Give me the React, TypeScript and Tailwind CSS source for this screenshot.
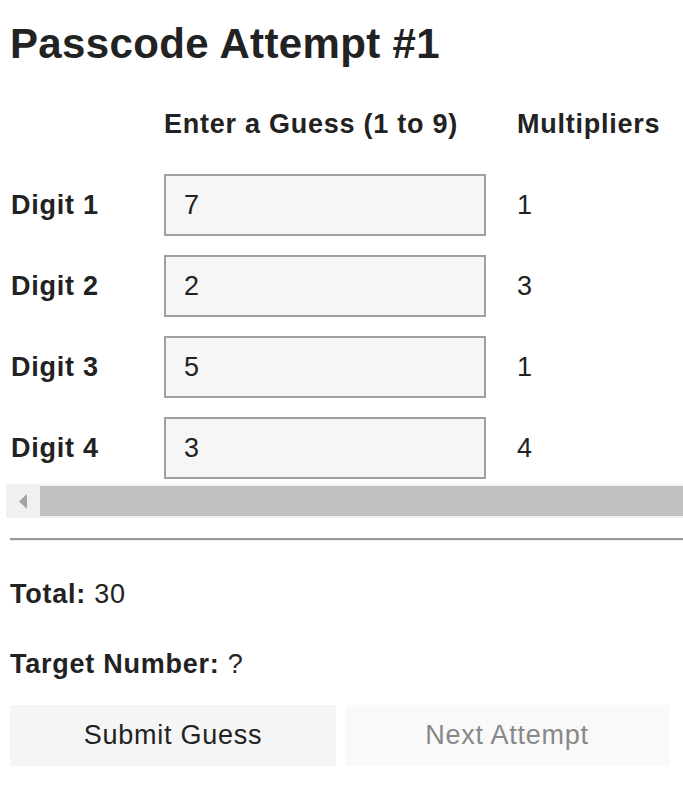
import React from 'react';

const rows = [
  { label: 'Digit 1', guess: '7', mult: '1' },
  { label: 'Digit 2', guess: '2', mult: '3' },
  { label: 'Digit 3', guess: '5', mult: '1' },
  { label: 'Digit 4', guess: '3', mult: '4' },
];

export default function App() {
  return (
    <div className="min-h-screen w-[683px] overflow-hidden bg-white px-[10px] font-['Liberation_Sans',Arial,sans-serif] text-[#222]">
      <h1 className="mt-[20px] text-[42px] font-bold leading-[48px] tracking-[0.35px]">Passcode Attempt #1</h1>

      {/* Table region (scrolls sideways) */}
      <div className="-ml-[4px] -mr-[10px]">
        <div className="pl-[5px] pt-[25px] text-[27px] leading-[31px] tracking-[0.75px]">
          <div className="grid grid-cols-[153px_353px_auto] gap-y-[19px] items-center">
            <div className="h-[62px]" />
            <div className="font-bold">Enter a Guess (1 to 9)</div>
            <div className="font-bold whitespace-nowrap">Multipliers</div>
            {rows.map((r) => (
              <React.Fragment key={r.label}>
                <div className="font-bold">{r.label}</div>
                <div>
                  <div className="h-[62px] w-[322px] border-2 border-[#a0a0a0] bg-[#f6f6f6] pl-[18px] flex items-center">
                    {r.guess}
                  </div>
                </div>
                <div>{r.mult}</div>
              </React.Fragment>
            ))}
          </div>
        </div>

        {/* Scrollbar */}
        <div className="mt-[5px] flex h-[34px] bg-[#f1f1f1]">
          <div className="flex w-[34px] items-center justify-center">
            <svg width="8" height="15" viewBox="0 0 8 15">
              <path d="M8 0 L0 7.5 L8 15 Z" fill="#a3a3a3" />
            </svg>
          </div>
          <div className="my-[2px] flex-1 bg-[#c1c1c1]" />
        </div>
      </div>

      <div className="-mr-[10px] mt-[20px] border-t-2 border-b border-t-[#9a9a9a] border-b-[#ececec]" />

      <div className="tracking-[0.75px]">
        <p className="mt-[38px] text-[27px] leading-[31px]">
          <span className="font-bold">Total:</span> 30
        </p>
        <p className="mt-[39px] text-[27px] leading-[31px]">
          <span className="font-bold">Target Number:</span> ?
        </p>

        <div className="mt-[25px] flex gap-[9px] text-[27px]">
          <button className="h-[61px] w-[326px] bg-[#f5f5f5] text-[#222]">Submit Guess</button>
          <button className="h-[61px] w-[324px] bg-[#f9f9f9] text-[#888]" disabled>
            Next Attempt
          </button>
        </div>
      </div>
    </div>
  );
}
